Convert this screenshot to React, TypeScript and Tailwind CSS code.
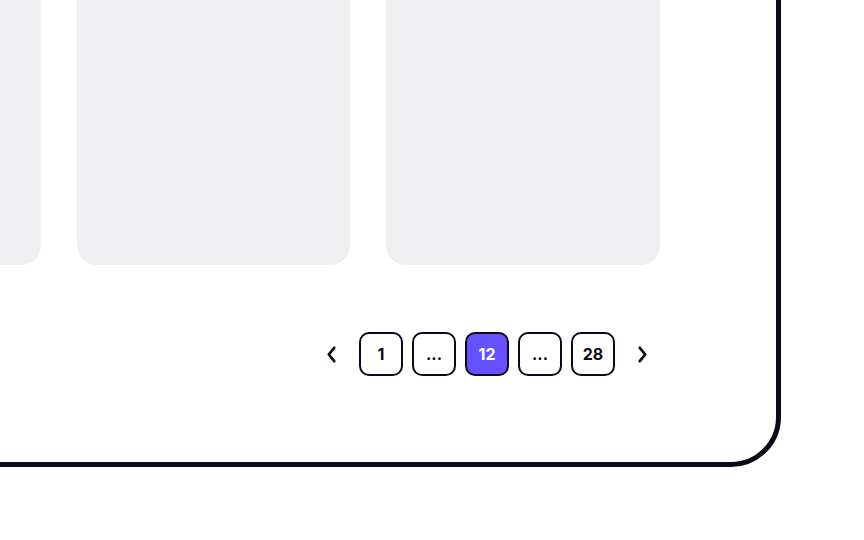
import React from "react";

// Pages shown in the pager; null means a gap ("...")
const PAGES: (number | null)[] = [1, null, 12, null, 28];
const CURRENT = 12;

const Chevron = ({ dir }: { dir: "left" | "right" }) => (
  <svg width="9" height="17" viewBox="0 0 9 17" fill="none" className="shrink-0">
    <path
      d={dir === "left" ? "M7.2 1.8 L1.8 8.5 L7.2 15.2" : "M1.8 1.8 L7.2 8.5 L1.8 15.2"}
      stroke="#0c0a1a"
      strokeWidth="2.7"
      strokeLinecap="round"
      strokeLinejoin="round"
    />
  </svg>
);

const PageButton = ({ page }: { page: number | null }) => {
  const active = page === CURRENT;
  return (
    <button
      className={
        active
          ? "w-11 h-11 flex items-center justify-center rounded-[10px] border-2 border-[#0c0a1a] bg-[#6552fe] text-white text-[16px] font-bold"
          : "w-11 h-11 flex items-center justify-center rounded-[10px] border-2 border-[#0c0a1a] bg-white text-[#0c0a1a] text-[16px] font-bold"
      }
    >
      {page === null ? "..." : page}
    </button>
  );
};

export default function App() {
  return (
    <div className="w-[864px] h-[540px] overflow-hidden bg-white font-['Inter',sans-serif]">
      <div className="-ml-[300px] -mt-[300px] w-[1081px] border-[5px] border-[#0c0a1a] rounded-br-[50px] bg-white pr-[116px] pb-[86px] flex flex-col items-end">
        {/* card grid */}
        <div className="flex gap-[36px]">
          <div className="w-[273px] h-[560px] rounded-b-[20px] bg-[#efeff1]" />
          <div className="w-[273px] h-[560px] rounded-b-[20px] bg-[#efeff1]" />
          <div className="w-[274px] h-[560px] rounded-b-[20px] bg-[#efeff1]" />
        </div>

        {/* pagination */}
        <div className="mt-[67px] mr-[13px] flex items-center">
          <Chevron dir="left" />
          <div className="mx-[23px] flex items-center gap-[9px]">
            {PAGES.map((p, i) => (
              <PageButton key={i} page={p} />
            ))}
          </div>
          <Chevron dir="right" />
        </div>
      </div>
    </div>
  );
}
